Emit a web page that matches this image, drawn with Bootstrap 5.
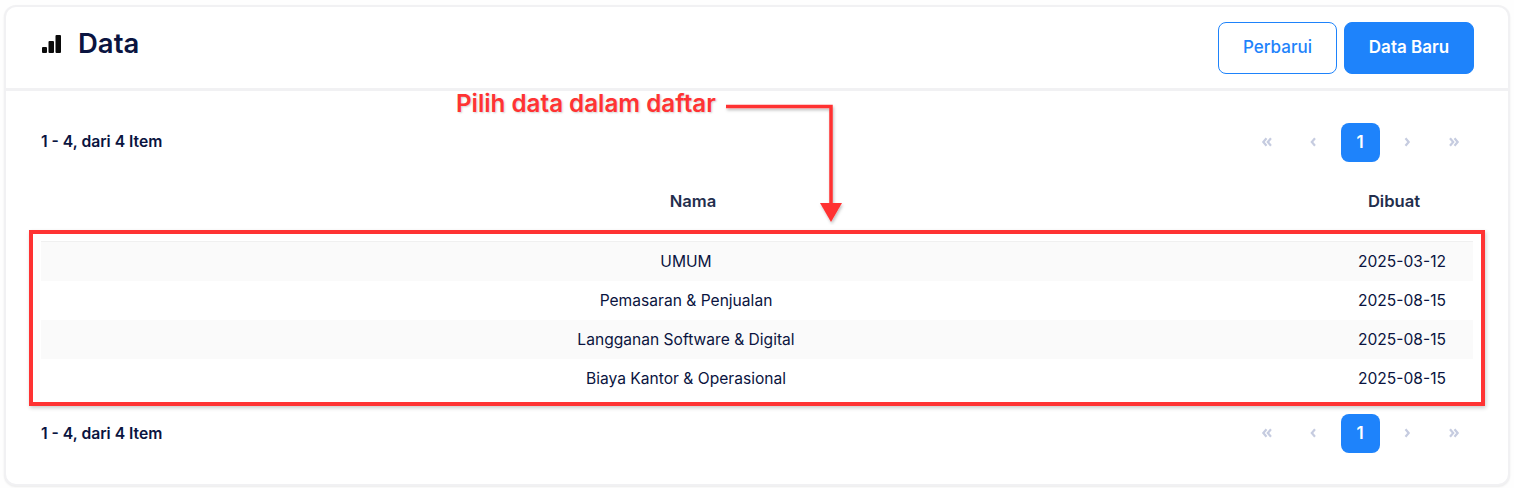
<!DOCTYPE html>
<html lang="id">
<head>
<meta charset="utf-8">
<title>Data</title>
<link href="https://cdn.jsdelivr.net/npm/bootstrap@5.3.0/dist/css/bootstrap.min.css" rel="stylesheet">
<style>
html, body { height: 100%; overflow: hidden; }
body { font-family: Inter, "Liberation Sans", sans-serif; background: #fefefe; color: #0b1539; position: relative; padding: 5px 4px 0 4px; }
.shell { height: 481px; background: #fff; border: 2px solid #f1f1f3; border-radius: 12px; box-shadow: 0 1px 2px rgba(0,0,0,.08); }
.shell-head { height: 84px; padding: 15px 34px 0 36px; border-bottom: 3px solid #f1f1f3; }
.shell-title { font-size: 27.5px; font-weight: 600; line-height: 42px; color: #0a1440; margin: 0; }
.bars { width: 19px; height: 18px; margin-right: 17px; margin-top: 1px; }
.act { height: 52px; border-radius: 8px; font-size: 17px; font-weight: 500; padding: 0; }
.act-light { width: 119px; color: #1e83fb; background: #fff; border: 1px solid #1e83fb; }
.act-solid { width: 130px; color: #fff; background: #1e83fb; border: 1px solid #1e83fb; font-weight: 600; }
.shell-head .act-group { gap: 7px; }
.shell-body { padding: 31px 34px 0 35px; }
.pager-row { height: 40px; }
.count { font-size: 15.7px; font-weight: 600; color: #0a1440; }
.pg { width: 39px; height: 39px; border-radius: 8px; color: #c6cce0; font-size: 17px; font-weight: 500; line-height: 1; display: flex; align-items: center; justify-content: center; }
.pg svg { width: 12px; height: 12px; }
.pg-list { gap: 7.7px; margin-right: 1px; }
.pg-on { background: #1e83fb; color: #fff; font-weight: 600; }
.datatable { width: 1432px; table-layout: fixed; margin: 0; border-collapse: collapse; }
.datatable th { font-size: 16.6px; font-weight: 600; color: #232e4d; text-align: center; height: 79px; padding: 0; border: 0; vertical-align: middle; background: transparent; }
.datatable th.h-name { padding-left: 14px; }
.datatable th.h-date { padding-right: 16px; }
.datatable td { font-size: 15.6px; color: #0a1440; text-align: center; height: 39px; padding: 0; border: 0; vertical-align: middle; background: transparent; font-weight: 400; }
.datatable tbody tr:first-child td { border-top: 1px solid #f0f0f0; height: 40px; }
.datatable tbody tr:nth-child(odd) td { background: #fafafa; }
.w-date { width: 142px; }
.gap-tbl { height: 15.4px; }
.note-text { position: absolute; left: 456px; top: 89px; font-size: 24.2px; font-weight: 600; line-height: 30px; color: #ff3333; text-shadow: 1px 1px 2px rgba(0,0,0,.18); white-space: nowrap; margin: 0; }
.note-box { position: absolute; left: 29px; top: 230px; width: 1456px; height: 176px; border: 4px solid #ff3333; box-shadow: 1px 2px 4px rgba(0,0,0,.2); }
.note-arrow { position: absolute; left: 720px; top: 100px; width: 130px; height: 125px; }
</style>
</head>
<body>
<div class="shell">
  <div class="shell-head d-flex justify-content-between align-items-start">
    <div class="d-flex align-items-center">
      <svg class="bars" viewBox="0 0 19 18" aria-hidden="true"><rect x="0" y="12" width="5" height="6" rx="1" fill="#0a0a0a"/><rect x="6.500" y="6" width="5.500" height="12" rx="1" fill="#0a0a0a"/><rect x="13.500" y="0" width="5.500" height="18" rx="1" fill="#0a0a0a"/></svg>
      <h1 class="shell-title">Data</h1>
    </div>
    <div class="d-flex act-group">
      <button type="button" class="btn act act-light">Perbarui</button>
      <button type="button" class="btn act act-solid">Data Baru</button>
    </div>
  </div>
  <div class="shell-body">
    <div class="pager-row d-flex justify-content-between align-items-center">
      <div class="count">1 - 4, dari 4 Item</div>
      <div class="d-flex pg-list">
        <span class="pg"><svg viewBox="0 0 12 12" fill="none" stroke="currentColor" stroke-width="2.200"><path d="M5.500 2.200 2.300 6l3.200 3.800M10 2.200 6.800 6l3.200 3.800"/></svg></span>
        <span class="pg"><svg viewBox="0 0 12 12" fill="none" stroke="currentColor" stroke-width="2.200"><path d="M8 2.200 4.800 6 8 9.800"/></svg></span>
        <span class="pg pg-on">1</span>
        <span class="pg"><svg viewBox="0 0 12 12" fill="none" stroke="currentColor" stroke-width="2.200"><path d="M4.500 2.200 7.700 6l-3.200 3.800"/></svg></span>
        <span class="pg"><svg viewBox="0 0 12 12" fill="none" stroke="currentColor" stroke-width="2.200"><path d="M2 2.200 5.200 6 2 9.800M6.500 2.200 9.700 6l-3.200 3.800"/></svg></span>
      </div>
    </div>
    <table class="table datatable">
      <colgroup><col><col class="w-date"></colgroup>
      <thead><tr><th class="h-name">Nama</th><th class="h-date">Dibuat</th></tr></thead>
      <tbody>
        <tr><td>UMUM</td><td>2025-03-12</td></tr>
        <tr><td>Pemasaran &amp; Penjualan</td><td>2025-08-15</td></tr>
        <tr><td>Langganan Software &amp; Digital</td><td>2025-08-15</td></tr>
        <tr><td>Biaya Kantor &amp; Operasional</td><td>2025-08-15</td></tr>
      </tbody>
    </table>
    <div class="gap-tbl"></div>
    <div class="pager-row d-flex justify-content-between align-items-center">
      <div class="count">1 - 4, dari 4 Item</div>
      <div class="d-flex pg-list">
        <span class="pg"><svg viewBox="0 0 12 12" fill="none" stroke="currentColor" stroke-width="2.200"><path d="M5.500 2.200 2.300 6l3.200 3.800M10 2.200 6.800 6l3.200 3.800"/></svg></span>
        <span class="pg"><svg viewBox="0 0 12 12" fill="none" stroke="currentColor" stroke-width="2.200"><path d="M8 2.200 4.800 6 8 9.800"/></svg></span>
        <span class="pg pg-on">1</span>
        <span class="pg"><svg viewBox="0 0 12 12" fill="none" stroke="currentColor" stroke-width="2.200"><path d="M4.500 2.200 7.700 6l-3.200 3.800"/></svg></span>
        <span class="pg"><svg viewBox="0 0 12 12" fill="none" stroke="currentColor" stroke-width="2.200"><path d="M2 2.200 5.200 6 2 9.800M6.500 2.200 9.700 6l-3.200 3.800"/></svg></span>
      </div>
    </div>
  </div>
</div>
<p class="note-text">Pilih data dalam daftar</p>
<div class="note-box"></div>
<svg class="note-arrow" viewBox="0 0 130 125" aria-hidden="true">
  <defs><filter id="sh" x="-10%" y="-10%" width="130%" height="130%"><feDropShadow dx="1" dy="2" stdDeviation="1.500" flood-color="#000" flood-opacity=".25"/></filter></defs>
  <g filter="url(#sh)"><path d="M6 6.500H111V104" fill="none" stroke="#ff3333" stroke-width="3.500"/><path d="M100 103h22l-11 19z" fill="#ff3333"/></g>
</svg>
</body>
</html>
